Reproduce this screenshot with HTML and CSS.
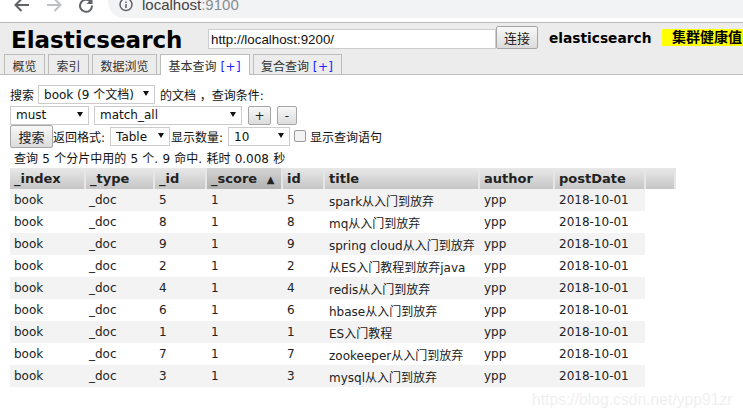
FILE: index.html
```html
<!DOCTYPE html>
<html lang="zh">
<head>
<meta charset="utf-8">
<title>Elasticsearch</title>
<link rel="stylesheet" href="styles.css">
</head>
<body>
<div class="chrome">
  <div class="nav">
    <svg class="nav-icon" width="20" height="20" viewBox="0 0 20 20"><path d="M19 5H6.500M11.500 -1 5.500 5l6 6" fill="none" stroke="#5f6368" stroke-width="2"/></svg>
    <svg class="nav-icon" width="20" height="20" viewBox="0 0 20 20"><path d="M3 5h12.500M10.500 -1l6 6-6 6" fill="none" stroke="#bdc1c6" stroke-width="2"/></svg>
    <svg class="nav-icon" width="20" height="20" viewBox="0 0 20 20"><path d="M14 5.500A6 6 0 1 1 12.200 1.500" fill="none" stroke="#5f6368" stroke-width="2"/><path d="M14.500 -2v6h-6z" fill="#5f6368"/></svg>
  </div>
  <div class="omnibox">
    <svg width="16" height="16" viewBox="0 0 16 16"><circle cx="8" cy="4.500" r="6" fill="none" stroke="#5f6368" stroke-width="1.500"/><path d="M8 4v4M8 1.500v1.500" stroke="#5f6368" stroke-width="1.500"/></svg>
    <span class="url">localhost<span class="url-port">:9100</span></span>
  </div>
</div>
<header class="top">
  <div class="brand-row">
    <h1 class="brand">Elasticsearch</h1>
    <input class="host" type="text" value="http://localhost:9200/">
    <button class="btn btn-connect" type="button">连接</button>
    <span class="cluster">elasticsearch</span>
    <span class="health">集群健康值</span>
  </div>
  <nav class="tabs">
    <div class="tab">概览</div>
    <div class="tab">索引</div>
    <div class="tab">数据浏览</div>
    <div class="tab active">基本查询 <span class="plus">[+]</span></div>
    <div class="tab">复合查询 <span class="plus">[+]</span></div>
  </nav>
</header>
<main class="query">
  <div class="line line-1">
    <span>搜索</span>
    <span class="sel sel-index"><select><option>book (9 个文档)</option></select></span>
    <span>的文档 ，查询条件:</span>
  </div>
  <div class="line line-2">
    <span class="sel sel-must"><select><option>must</option></select></span>
    <span class="sel sel-field"><select><option>match_all</option></select></span>
    <button class="btn btn-small btn-plus" type="button">+</button>
    <button class="btn btn-small btn-minus" type="button">-</button>
  </div>
  <div class="line line-3">
    <button class="btn btn-search" type="button">搜索</button>
    <span>返回格式:</span>
    <span class="sel sel-format"><select><option>Table</option></select></span>
    <span>显示数量:</span>
    <span class="sel sel-size"><select><option>10</option></select></span>
    <span class="check"></span>
    <span>显示查询语句</span>
  </div>
  <p class="status">查询 5 个分片中用的 5 个. 9 命中. 耗时 0.008 秒</p>
  <table class="results">
    <colgroup>
      <col class="c1"><col class="c2"><col class="c3"><col class="c4"><col class="c5"><col class="c6"><col class="c7"><col class="c8"><col class="c9">
    </colgroup>
    <thead>
      <tr><th>_index</th><th>_type</th><th>_id</th><th class="sorted">_score <span class="asc">▲</span></th><th>id</th><th>title</th><th>author</th><th>postDate</th><th></th></tr>
    </thead>
    <tbody>
      <tr><td>book</td><td>_doc</td><td>5</td><td>1</td><td>5</td><td>spark从入门到放弃</td><td>ypp</td><td>2018-10-01</td></tr>
      <tr><td>book</td><td>_doc</td><td>8</td><td>1</td><td>8</td><td>mq从入门到放弃</td><td>ypp</td><td>2018-10-01</td></tr>
      <tr><td>book</td><td>_doc</td><td>9</td><td>1</td><td>9</td><td>spring cloud从入门到放弃</td><td>ypp</td><td>2018-10-01</td></tr>
      <tr><td>book</td><td>_doc</td><td>2</td><td>1</td><td>2</td><td>从ES入门教程到放弃java</td><td>ypp</td><td>2018-10-01</td></tr>
      <tr><td>book</td><td>_doc</td><td>4</td><td>1</td><td>4</td><td>redis从入门到放弃</td><td>ypp</td><td>2018-10-01</td></tr>
      <tr><td>book</td><td>_doc</td><td>6</td><td>1</td><td>6</td><td>hbase从入门到放弃</td><td>ypp</td><td>2018-10-01</td></tr>
      <tr><td>book</td><td>_doc</td><td>1</td><td>1</td><td>1</td><td>ES入门教程</td><td>ypp</td><td>2018-10-01</td></tr>
      <tr><td>book</td><td>_doc</td><td>7</td><td>1</td><td>7</td><td>zookeeper从入门到放弃</td><td>ypp</td><td>2018-10-01</td></tr>
      <tr><td>book</td><td>_doc</td><td>3</td><td>1</td><td>3</td><td>mysql从入门到放弃</td><td>ypp</td><td>2018-10-01</td></tr>
    </tbody>
  </table>
</main>
<div class="watermark">https://blog.csdn.net/ypp91zr</div>
</body>
</html>
```
FILE: styles.css
```css
* { box-sizing: border-box; }
html, body { margin: 0; padding: 0; height: 418px; overflow: hidden; background: #fff; }
body {
  position: relative;
  font-family: "DejaVu Sans", "Noto Sans CJK SC", sans-serif;
  font-size: 12px;
  color: #111;
}
.chrome {
  height: 23px;
  display: flex;
  align-items: flex-start;
  border-bottom: 1px solid #b9b9b9;
  overflow: hidden;
}
.nav { display: flex; gap: 14px; padding-left: 10px; width: 108px; flex: none; }
.omnibox {
  flex: 1;
  height: 18px;
  background: #f1f3f4;
  border-bottom-left-radius: 16px;
  display: flex;
  align-items: flex-start;
  gap: 8px;
  padding-left: 10px;
}
.url {
  font-family: "Liberation Sans", sans-serif;
  font-size: 15px;
  line-height: 15px;
  margin-top: -3px;
  color: #444;
}
.url-port { color: #8a8d91; }
.top {
  height: 52px;
  background: #ececec;
  border-bottom: 1px solid #bdbdbd;
  position: relative;
}
.brand-row { height: 31px; display: flex; align-items: flex-start; padding-left: 11px; }
.brand {
  margin: 3px 0 0;
  width: 197px;
  font-size: 23px;
  line-height: 28px;
  font-weight: bold;
  color: #000;
}
.host {
  width: 288px;
  height: 20px;
  margin-top: 6px;
  padding: 0 2px;
  border: 1px solid #ccc;
  background: #fff;
  font-family: "Liberation Sans", sans-serif;
  font-size: 13.333px;
  color: #111;
  outline: 0;
}
.btn {
  font-family: inherit;
  font-size: 12px;
  color: #222;
  background: linear-gradient(#f8f8f8, #dcdcdc);
  border: 1px solid #a6a6a6;
  border-radius: 2px;
  padding: 0;
}
.btn-connect { width: 42px; height: 23px; margin-top: 3px; font-size: 13px; }
.cluster { margin: 6px 0 0 11px; width: 113px; font-size: 13.750px; line-height: 18px; font-weight: bold; color: #000; }
.health {
  margin-top: 6px;
  flex: 1;
  height: 17px;
  padding-left: 10px;
  background: #ff0;
  font-weight: bold;
  font-size: 14px;
  line-height: 17px;
  white-space: nowrap;
  overflow: hidden;
  color: #000;
}
.tabs { display: flex; gap: 3px; padding-left: 4px; height: 20px; }
.tab {
  height: 20px;
  padding: 0 7.500px;
  background: #ececec;
  border: 1px solid #bdbdbd;
  border-bottom: 0;
  line-height: 24px;
  white-space: nowrap;
  color: #333;
}
.tab.active { height: 21px; background: #fff; position: relative; }
.plus { color: #22f; letter-spacing: 0.400px; }
.query { padding: 9px 0 0 10px; }
.line { display: flex; align-items: center; }
.line-1 { height: 21px; gap: 5px; }
.line-2 { height: 20px; margin-top: 0; }
.line-3 { height: 23px; }
.sel { display: block; position: relative; flex: none; }
.sel select {
  display: block;
  width: 100%;
  height: 19px;
  padding: 0 0 0 5px;
  appearance: none;
  border: 1px solid #ccc;
  background: #fff;
  font-family: inherit;
  font-size: 12px;
  color: #111;
  border-radius: 0;
  outline: 0;
}
.sel::after {
  content: "";
  position: absolute;
  right: 6px;
  top: 6px;
  border-left: 3.500px solid transparent;
  border-right: 3.500px solid transparent;
  border-top: 5px solid #111;
}
.sel-index { width: 117px; margin-left: -1px; }
.sel-must { width: 79px; }
.sel-field { width: 148px; margin-left: 5px; }
.sel-format { width: 60px; margin: 0 1px 0 5px; }
.sel-size { width: 62px; margin-left: 5px; }
.btn-small { height: 19px; margin-top: 1px; font-size: 12px; }
.btn-plus { width: 23px; margin-left: 6px; }
.btn-minus { width: 20px; margin-left: 6px; }
.btn-search { width: 43px; height: 23px; font-size: 13px; }
.check {
  width: 12px;
  height: 12px;
  margin: 0 4px;
  border: 1px solid #999;
  border-radius: 2px;
  background: #f3f3f3;
  flex: none;
  position: relative;
  top: -1px;
}
.status { margin: 0; height: 20px; padding: 4px 0 0 4px; line-height: 15px; word-spacing: 0.450px; }
.results {
  table-layout: fixed;
  width: 665px;
  border-collapse: collapse;
  border-spacing: 0;
}
.c1 { width: 75px; } .c2 { width: 69px; } .c3 { width: 52px; } .c4 { width: 76px; } .c5 { width: 42px; }
.c6 { width: 155px; } .c7 { width: 75px; } .c8 { width: 91px; } .c9 { width: 30px; }
th {
  height: 21px;
  padding: 0 0 0 4px;
  text-align: left;
  font-size: 13px;
  font-weight: bold;
  white-space: nowrap;
  color: #222;
  background: linear-gradient(#e8e8e8, #c6c6c6);
  border-right: 2px solid #e6e6e6;
  overflow: hidden;
}
th.sorted { background: linear-gradient(#d4d4d4, #b2b2b2); }
.asc { font-size: 10px; margin-left: 5px; }
td {
  height: 22px;
  padding: 0 0 0 4px;
  white-space: nowrap;
  overflow: hidden;
  color: #222;
}
td:nth-child(n+3) { padding-left: 5px; }
tbody tr:nth-child(odd) td { background: #f3f3f3; }
.watermark {
  position: absolute;
  left: 532px;
  top: 390px;
  font-family: "Liberation Sans", sans-serif;
  font-size: 15.700px;
  line-height: 20px;
  color: #f0f0f0;
  white-space: nowrap;
}
```
